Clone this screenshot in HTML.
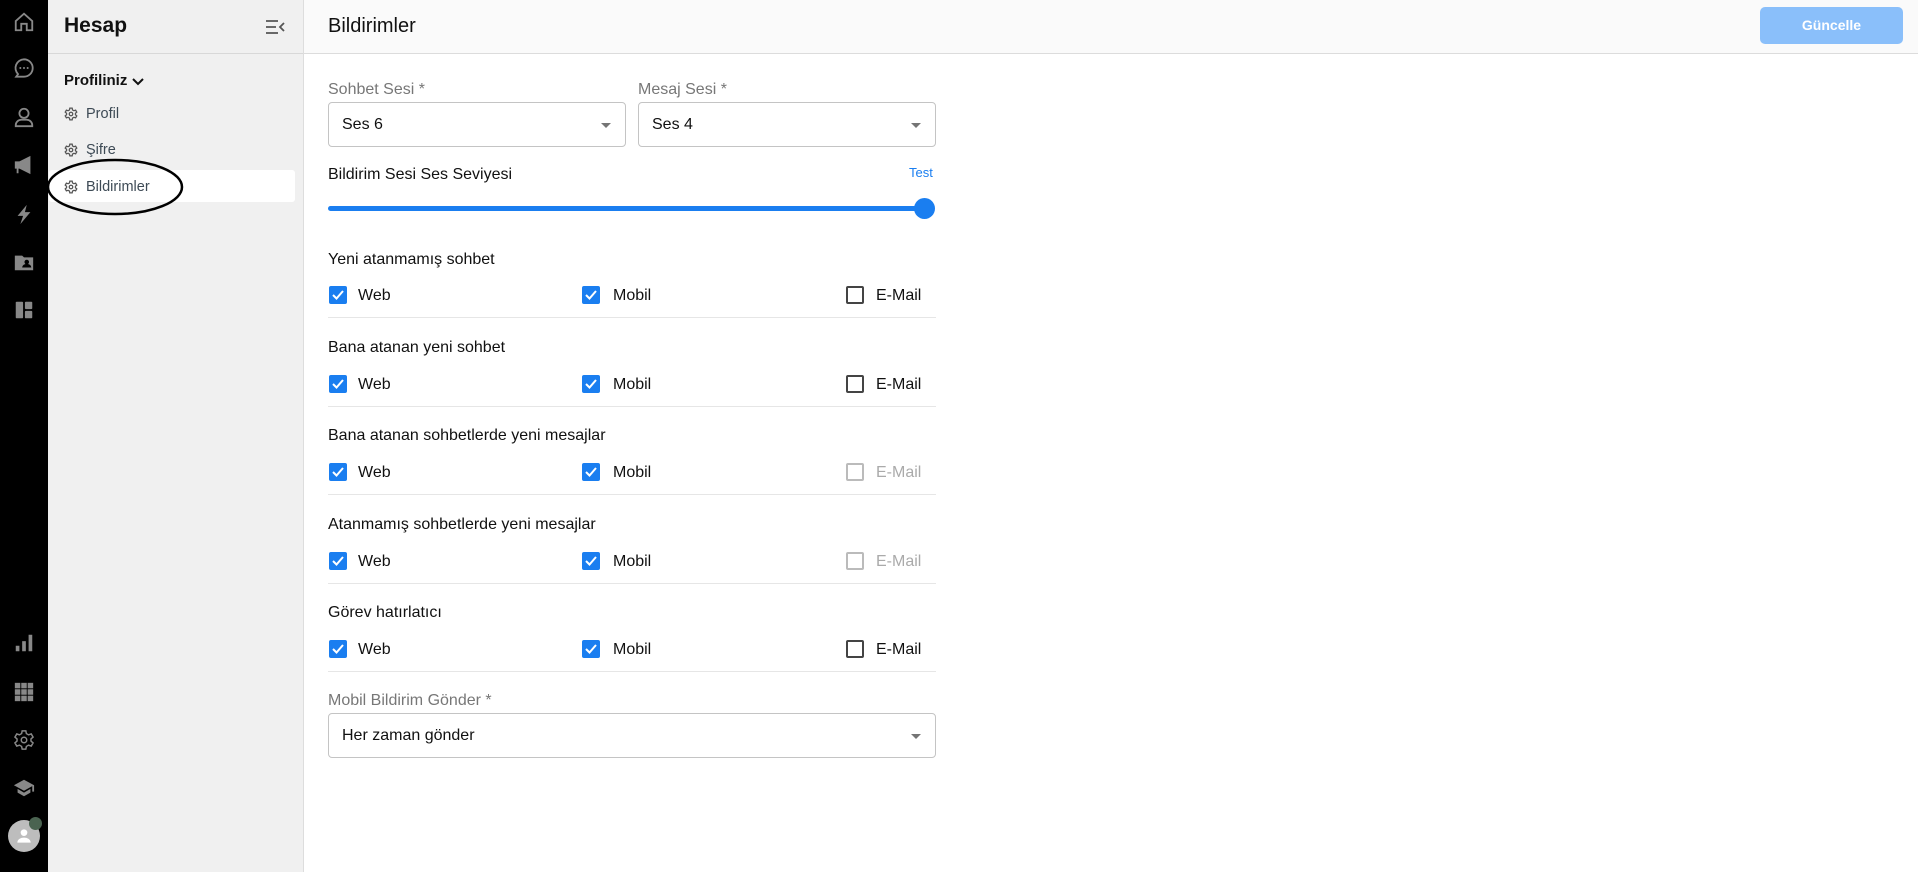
<!DOCTYPE html>
<html><head><meta charset="utf-8"><style>
*{box-sizing:border-box;margin:0;padding:0}
body{width:1918px;height:872px;overflow:hidden;background:#fff;font-family:"Liberation Sans",Arial,sans-serif;position:relative;color:#111}
.rail{position:absolute;left:0;top:0;width:48px;height:872px;background:#000}
.rail svg{position:absolute;left:13px;width:22px;height:22px}
.side{position:absolute;left:48px;top:0;width:256px;height:872px;background:#f0f0f0;border-right:1px solid #ddd}
.side .hd{height:54px;border-bottom:1px solid #d8d8d8;position:relative}
.abs{position:absolute;white-space:nowrap}
.main-hd{position:absolute;left:304px;top:0;right:0;height:54px;background:#fafafa;border-bottom:1px solid #dcdcdc}
.lbl{font-size:16px;color:#777}
.sel{position:absolute;height:45px;border:1px solid #c4c4c4;border-radius:4px;background:#fff}
.sel span{position:absolute;left:13px;top:13px;font-size:16px;color:#111}
.sel i{position:absolute;right:14px;top:20px;border-left:5px solid transparent;border-right:5px solid transparent;border-top:5px solid #757575}
.cb{position:absolute;width:18px;height:18px;border-radius:2px;background:#1a7ef0}
.cb svg{position:absolute;left:1px;top:1px}
.cbo{position:absolute;width:18px;height:18px;border-radius:2px;border:2px solid #444;background:#fff}
.cbo.d{border-color:#bbb}
.t{font-size:16px}
.div{position:absolute;left:328px;width:608px;height:1px;background:#e6e6e6}
.nav{font-size:14.5px;color:#3d4a55}
</style></head><body>
<div class="rail">
<svg style="top:11px" viewBox="0 0 24 24" fill="none" stroke="#888" stroke-width="2"><path d="M3 11l9-8 9 8v10h-6v-7H9v7H3z"/></svg>
<svg style="top:57px" viewBox="0 0 24 24" fill="none" stroke="#888" stroke-width="2"><path d="M12 2.5a9.5 9.5 0 1 1 0 19H3.5l2-2.8A9.5 9.5 0 0 1 12 2.5z"/><circle cx="8" cy="12" r="1.1" fill="#888" stroke="none"/><circle cx="12" cy="12" r="1.1" fill="#888" stroke="none"/><circle cx="16" cy="12" r="1.1" fill="#888" stroke="none"/></svg>
<svg style="top:106px" viewBox="0 0 24 24" fill="none" stroke="#888" stroke-width="2"><circle cx="12" cy="8" r="5"/><path d="M3 22v-1a6 6 0 0 1 6-6h6a6 6 0 0 1 6 6v1z"/></svg>
<svg style="top:154px" viewBox="0 0 24 24" fill="#888"><path d="M2 8h5l12-6v20L7 16H6v5H4v-5H2z"/></svg>
<svg style="top:203px" viewBox="0 0 24 24" fill="#888"><path d="M15 2L5 14h6l-3 9 11-13h-6z"/></svg>
<svg style="top:251px" viewBox="0 0 24 24" fill="#888"><path d="M2 5h8l2 2h10v14H2z"/><circle cx="15" cy="12" r="2.5" fill="#000"/><path d="M10 18a5 4 0 0 1 10 0z" fill="#000"/></svg>
<svg style="top:299px" viewBox="0 0 24 24" fill="#888"><rect x="3" y="3" width="8" height="18" rx="1"/><rect x="13" y="3" width="8" height="8" rx="1"/><rect x="13" y="13" width="8" height="8" rx="1"/></svg>
<svg style="top:632px" viewBox="0 0 24 24" fill="#888"><rect x="3" y="15" width="4" height="6"/><rect x="10" y="10" width="4" height="11"/><rect x="17" y="3" width="4" height="18"/></svg>
<svg style="top:681px" viewBox="0 0 24 24" fill="#888"><rect x="2" y="2" width="6" height="6"/><rect x="9" y="2" width="6" height="6"/><rect x="16" y="2" width="6" height="6"/><rect x="2" y="9" width="6" height="6"/><rect x="9" y="9" width="6" height="6"/><rect x="16" y="9" width="6" height="6"/><rect x="2" y="16" width="6" height="6"/><rect x="9" y="16" width="6" height="6"/><rect x="16" y="16" width="6" height="6"/></svg>
<svg style="top:729px" viewBox="0 0 24 24" fill="none" stroke="#888" stroke-width="1.6"><circle cx="12" cy="12" r="3"/><path d="M10 2h4l.6 3 2.4 1.4 2.9-1 2 3.4-2.3 2v2.4l2.3 2-2 3.4-2.9-1-2.4 1.4-.6 3h-4l-.6-3L7 17.6l-2.9 1-2-3.4 2.3-2v-2.4l-2.3-2 2-3.4 2.9 1L9.4 5z"/></svg>
<svg style="top:777px" viewBox="0 0 24 24" fill="#888"><path d="M12 3L1 9l11 6 9-5v6h2V9z"/><path d="M5 13v4l7 4 7-4v-4l-7 4z"/></svg>
<div style="position:absolute;left:8px;top:820px;width:32px;height:32px;border-radius:50%;background:#bdbdbd"></div>
<svg style="top:826px;left:14px;width:20px;height:20px" viewBox="0 0 24 24" fill="#fff"><circle cx="12" cy="8" r="4"/><path d="M4 20c0-4 4-6 8-6s8 2 8 6z"/></svg>
<div style="position:absolute;left:29px;top:817px;width:13px;height:13px;border-radius:50%;background:#4a6350"></div>
</div>
<div class="side">
<div class="hd">
<div class="abs" style="left:16px;top:14px;font-size:21px;font-weight:bold;color:#111">Hesap</div>
<svg class="abs" style="left:217px;top:19px" width="20" height="16" viewBox="0 0 20 16" fill="none" stroke="#555" stroke-width="1.8"><path d="M1 2h12M1 8h10M1 14h12M19 4l-4 4 4 4"/></svg>
</div>
<div class="abs" style="left:16px;top:72px;font-size:15px;font-weight:bold;display:flex;align-items:center;gap:5px">Profiliniz<svg width="12" height="10" viewBox="0 0 12 10" fill="none" stroke="#111" stroke-width="2"><path d="M1 3l5 5 5-5"/></svg></div>
<div class="abs" style="left:1px;top:170px;width:246px;height:32px;background:#fff;border-radius:3px"></div>
<svg class="abs" style="left:16px;top:107px" width="14" height="14" viewBox="0 0 24 24" fill="none" stroke="#555" stroke-width="2.2"><circle cx="12" cy="12" r="3"/><path d="M10 2h4l.6 3 2.4 1.4 2.9-1 2 3.4-2.3 2v2.4l2.3 2-2 3.4-2.9-1-2.4 1.4-.6 3h-4l-.6-3L7 17.6l-2.9 1-2-3.4 2.3-2v-2.4l-2.3-2 2-3.4 2.9 1L9.4 5z"/></svg>
<div class="abs nav" style="left:38px;top:106px">Profil</div>
<svg class="abs" style="left:16px;top:143px" width="14" height="14" viewBox="0 0 24 24" fill="none" stroke="#555" stroke-width="2.2"><circle cx="12" cy="12" r="3"/><path d="M10 2h4l.6 3 2.4 1.4 2.9-1 2 3.4-2.3 2v2.4l2.3 2-2 3.4-2.9-1-2.4 1.4-.6 3h-4l-.6-3L7 17.6l-2.9 1-2-3.4 2.3-2v-2.4l-2.3-2 2-3.4 2.9 1L9.4 5z"/></svg>
<div class="abs nav" style="left:38px;top:142px">Şifre</div>
<svg class="abs" style="left:16px;top:180px" width="14" height="14" viewBox="0 0 24 24" fill="none" stroke="#555" stroke-width="2.2"><circle cx="12" cy="12" r="3"/><path d="M10 2h4l.6 3 2.4 1.4 2.9-1 2 3.4-2.3 2v2.4l2.3 2-2 3.4-2.9-1-2.4 1.4-.6 3h-4l-.6-3L7 17.6l-2.9 1-2-3.4 2.3-2v-2.4l-2.3-2 2-3.4 2.9 1L9.4 5z"/></svg>
<div class="abs nav" style="left:38px;top:179px">Bildirimler</div>
</div>
<svg class="abs" style="left:0;top:0" width="300" height="260"><ellipse cx="115" cy="187" rx="67" ry="27" fill="none" stroke="#000" stroke-width="2.5"/></svg>
<div class="main-hd">
<div class="abs" style="left:24px;top:15px;font-size:20px;color:#111">Bildirimler</div>
<div class="abs" style="left:1456px;top:7px;width:143px;height:37px;border-radius:5px;background:#8abffa;color:#fff;font-weight:bold;font-size:14px;text-align:center;line-height:37px">Güncelle</div>
</div>
<div class="abs lbl" style="left:328px;top:81px">Sohbet Sesi *</div>
<div class="abs lbl" style="left:638px;top:81px">Mesaj Sesi *</div>
<div class="sel" style="left:328px;top:102px;width:298px"><span>Ses 6</span><i></i></div>
<div class="sel" style="left:638px;top:102px;width:298px"><span>Ses 4</span><i></i></div>
<div class="abs t" style="left:328px;top:166px">Bildirim Sesi Ses Seviyesi</div>
<div class="abs" style="left:909px;top:165px;font-size:13px;color:#1a7ef0">Test</div>
<div class="abs" style="left:328px;top:206px;width:600px;height:5px;border-radius:3px;background:#1a7ef0"></div>
<div class="abs" style="left:914px;top:198px;width:21px;height:21px;border-radius:50%;background:#1a7ef0"></div>

<div class="abs t" style="left:328px;top:251px">Yeni atanmamış sohbet</div>
<div class="abs t" style="left:328px;top:339px">Bana atanan yeni sohbet</div>
<div class="abs t" style="left:328px;top:427px">Bana atanan sohbetlerde yeni mesajlar</div>
<div class="abs t" style="left:328px;top:516px">Atanmamış sohbetlerde yeni mesajlar</div>
<div class="abs t" style="left:328px;top:604px">Görev hatırlatıcı</div>

<div class="abs lbl" style="left:328px;top:692px">Mobil Bildirim Gönder *</div>
<div class="sel" style="left:328px;top:713px;width:608px"><span>Her zaman gönder</span><i></i></div>

<div class="cb" style="left:329px;top:286px"><svg width="16" height="16" viewBox="0 0 16 16" fill="none" stroke="#fff" stroke-width="2"><path d="M3 8l3.5 3.5L13 4"/></svg></div><div class="abs t" style="left:358px;top:287px">Web</div>
<div class="cb" style="left:582px;top:286px"><svg width="16" height="16" viewBox="0 0 16 16" fill="none" stroke="#fff" stroke-width="2"><path d="M3 8l3.5 3.5L13 4"/></svg></div><div class="abs t" style="left:613px;top:287px">Mobil</div>
<div class="cbo" style="left:846px;top:286px"></div><div class="abs t" style="left:876px;top:287px">E-Mail</div>
<div class="div" style="top:317px"></div>

<div class="cb" style="left:329px;top:375px"><svg width="16" height="16" viewBox="0 0 16 16" fill="none" stroke="#fff" stroke-width="2"><path d="M3 8l3.5 3.5L13 4"/></svg></div><div class="abs t" style="left:358px;top:376px">Web</div>
<div class="cb" style="left:582px;top:375px"><svg width="16" height="16" viewBox="0 0 16 16" fill="none" stroke="#fff" stroke-width="2"><path d="M3 8l3.5 3.5L13 4"/></svg></div><div class="abs t" style="left:613px;top:376px">Mobil</div>
<div class="cbo" style="left:846px;top:375px"></div><div class="abs t" style="left:876px;top:376px">E-Mail</div>
<div class="div" style="top:406px"></div>

<div class="cb" style="left:329px;top:463px"><svg width="16" height="16" viewBox="0 0 16 16" fill="none" stroke="#fff" stroke-width="2"><path d="M3 8l3.5 3.5L13 4"/></svg></div><div class="abs t" style="left:358px;top:464px">Web</div>
<div class="cb" style="left:582px;top:463px"><svg width="16" height="16" viewBox="0 0 16 16" fill="none" stroke="#fff" stroke-width="2"><path d="M3 8l3.5 3.5L13 4"/></svg></div><div class="abs t" style="left:613px;top:464px">Mobil</div>
<div class="cbo d" style="left:846px;top:463px"></div><div class="abs t" style="left:876px;top:464px;color:#aaa">E-Mail</div>
<div class="div" style="top:494px"></div>

<div class="cb" style="left:329px;top:552px"><svg width="16" height="16" viewBox="0 0 16 16" fill="none" stroke="#fff" stroke-width="2"><path d="M3 8l3.5 3.5L13 4"/></svg></div><div class="abs t" style="left:358px;top:553px">Web</div>
<div class="cb" style="left:582px;top:552px"><svg width="16" height="16" viewBox="0 0 16 16" fill="none" stroke="#fff" stroke-width="2"><path d="M3 8l3.5 3.5L13 4"/></svg></div><div class="abs t" style="left:613px;top:553px">Mobil</div>
<div class="cbo d" style="left:846px;top:552px"></div><div class="abs t" style="left:876px;top:553px;color:#aaa">E-Mail</div>
<div class="div" style="top:583px"></div>

<div class="cb" style="left:329px;top:640px"><svg width="16" height="16" viewBox="0 0 16 16" fill="none" stroke="#fff" stroke-width="2"><path d="M3 8l3.5 3.5L13 4"/></svg></div><div class="abs t" style="left:358px;top:641px">Web</div>
<div class="cb" style="left:582px;top:640px"><svg width="16" height="16" viewBox="0 0 16 16" fill="none" stroke="#fff" stroke-width="2"><path d="M3 8l3.5 3.5L13 4"/></svg></div><div class="abs t" style="left:613px;top:641px">Mobil</div>
<div class="cbo" style="left:846px;top:640px"></div><div class="abs t" style="left:876px;top:641px">E-Mail</div>
<div class="div" style="top:671px"></div>
</body></html>
